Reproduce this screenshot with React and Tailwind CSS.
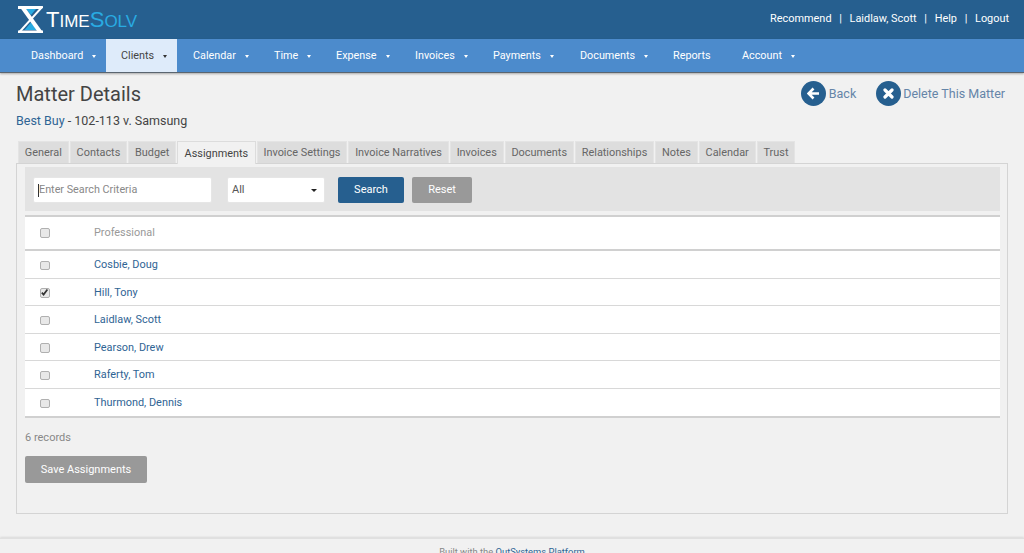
const nav = [
  ["Dashboard", "w-[90px]", "pl-[15px]"],
  ["Clients", "w-[71px]", "pl-[15px]", true],
  ["Calendar", "w-[82px]", "pl-[16px]"],
  ["Time", "w-[62px]", "pl-[15px]"],
  ["Expense", "w-[79px]", "pl-[15px]"],
  ["Invoices", "w-[78px]", "pl-[15px]"],
  ["Payments", "w-[87px]", "pl-[15px]"],
  ["Documents", "w-[93px]", "pl-[15px]"],
  ["Reports", "w-[69px]", "pl-[15px]", false, true],
  ["Account", "w-[80px]", "pl-[15px]"],
];
const tabs = ["General", "Contacts", "Budget", "Assignments", "Invoice Settings", "Invoice Narratives", "Invoices", "Documents", "Relationships", "Notes", "Calendar", "Trust"];
const people = [["Cosbie, Doug"], ["Hill, Tony", true], ["Laidlaw, Scott"], ["Pearson, Drew"], ["Raferty, Tom"], ["Thurmond, Dennis"]];

function Logo() {
  return (
    <div className="flex items-center">
      <svg width="25" height="27" viewBox="0 0 25 27" className="mt-[-1px]">
        <path d="M8 3H18L13 9Z" fill="#29abe2" />
        <path d="M6.5 24H19L13 16.5Z" fill="#29abe2" />
        <path d="M0 0H25L24 3H0Z" fill="#fff" />
        <path d="M0 27V24.5H25V27Z" fill="#fff" />
        <path d="M1 0H6L24 25H19Z" fill="#fff" />
        <path d="M24.5 0.5L1 26.5" stroke="#fff" strokeWidth="2" />
      </svg>
      <div className="ml-[3px] font-['Liberation_Sans',sans-serif] leading-none flex items-baseline mt-[1px]">
        <span className="text-white text-[22px]">T</span>
        <span className="text-white text-[17px]">IME</span>
        <span className="text-[#29abe2] text-[22px]">S</span>
        <span className="text-[#29abe2] text-[17px]">OLV</span>
      </div>
    </div>
  );
}

function Box({ checked }) {
  return (
    <span className="w-[9.5px] h-[9.5px] rounded-[2px] border border-[#b0b0b0] bg-[#e8e8e8] flex items-center justify-center">
      {checked && (
        <svg width="9" height="9" viewBox="0 0 9 9" className="shrink-0">
          <path d="M1.8 4.6L3.6 6.6L7.4 1.6" fill="none" stroke="#333" strokeWidth="1.7" />
        </svg>
      )}
    </span>
  );
}

export default function App() {
  return (
    <div className="h-[553px] w-[1024px] overflow-hidden bg-[#f1f1f1] font-['Roboto',sans-serif] text-[#444]">
      <header className="h-[39px] bg-[#265f8f] flex items-center justify-between pl-[18px] pr-[15px]">
        <Logo />
        <div className="flex items-center text-white text-[10.9px] gap-[7.7px]">
          <span>Recommend</span><span>|</span><span>Laidlaw, Scott</span><span>|</span><span>Help</span><span>|</span><span>Logout</span>
        </div>
      </header>
      <nav className="h-[34px] bg-[#4c8bcc] border-b border-[#5a6570] shadow-[0_1px_2px_rgba(0,0,0,0.3)] flex pl-[16px] text-[10.8px]">
        {nav.map(([t, w, pl, active, noCaret]) => (
          <div key={t} className={`${w} ${pl} h-[33px] pt-[2px] flex items-center ${active ? "bg-[#deebfa] text-[#444]" : "text-white"}`}>
            <span>{t}</span>
            {!noCaret && <span className={`ml-[9px] w-0 h-0 border-x-[2.5px] border-x-transparent border-t-[3px] ${active ? "border-t-[#333]" : "border-t-white"}`} />}
          </div>
        ))}
      </nav>

      <main className="px-[16px]">
        <div className="flex justify-between items-start h-[67px]">
          <div>
            <h1 className="text-[20px] leading-[24px] mt-[9px] text-[#444]">Matter Details</h1>
            <div className="text-[12.5px] leading-[16px] mt-[7px]">
              <span className="text-[#2f6494]">Best Buy</span> - 102-113 v. Samsung
            </div>
          </div>
          <div className="flex items-center mt-[8px] mr-[3px] text-[#6585a8] text-[12.5px]">
            <span className="w-[25px] h-[25px] rounded-full bg-[#265f8f] flex items-center justify-center mr-[3px]">
              <svg width="13" height="13" viewBox="0 0 13 13"><path d="M6.5 1.5L1.5 6.5L6.5 11.5M2 6.5H12" fill="none" stroke="#fff" strokeWidth="2.6" /></svg>
            </span>
            <span className="pt-[1px]">Back</span>
            <span className="w-[25px] h-[25px] rounded-full bg-[#265f8f] flex items-center justify-center ml-[20px] mr-[2px]">
              <svg width="11" height="11" viewBox="0 0 11 11"><path d="M2 2L9 9M9 2L2 9" stroke="#fff" strokeWidth="3.2" strokeLinecap="round" /></svg>
            </span>
            <span className="pt-[1px]">Delete This Matter</span>
          </div>
        </div>

        <div className="flex items-end pl-[2px] gap-[1px] h-[23px] text-[10.9px] relative z-10">
          {tabs.map((t) => (
            <div key={t} className={t === "Assignments"
              ? "h-[23px] mb-[-1px] px-[6.4px] pt-[2px] flex items-center bg-[#f1f1f1] border border-b-0 border-[#dcdcdc] text-[#444]"
              : "h-[22px] px-[5.85px] pt-[2px] flex items-center bg-[#dddddd] text-[#666] border-t border-x border-[#e4e4e4]"}>
              {t}
            </div>
          ))}
        </div>

        <section className="h-[351px] border border-[#d4d4d4] pl-[8px] pr-[7px] pt-[3px]">
          <div className="h-[44px] bg-[#e3e3e3] flex items-center pl-[8px] pt-[2px]">
            <div className="w-[179px] h-[26px] bg-white rounded-[2px] border border-[#e6e6e6] flex items-center pl-[4px] text-[10.8px] text-[#888]">
              <span className="w-px h-[13px] bg-[#333]" />Enter Search Criteria
            </div>
            <div className="ml-[15px] w-[98px] h-[26px] bg-white rounded-[2px] border border-[#e6e6e6] flex items-center justify-between pl-[4px] pr-[7px] text-[11px] text-[#555]">
              All
              <span className="w-0 h-0 border-x-[3px] border-x-transparent border-t-[3.5px] border-t-[#222]" />
            </div>
            <div className="ml-[13px] w-[66px] h-[26px] bg-[#265f8f] rounded-[2px] flex items-center justify-center text-white text-[11px]">Search</div>
            <div className="ml-[8px] w-[60px] h-[26px] bg-[#999] rounded-[2px] flex items-center justify-center text-white text-[11px]">Reset</div>
          </div>

          <div className="mt-[4px] bg-white border-t-2 border-b-2 border-[#d0d0d0] text-[10.9px]">
            <div className="h-[34px] flex items-center border-b-2 border-[#d0d0d0]">
              <div className="w-[69px] pl-[15px]"><Box /></div>
              <span className="text-[#999]">Professional</span>
            </div>
            {people.map(([name, c], i) => (
              <div key={name} className={`h-[27.5px] pt-[2px] flex items-center ${i < 5 ? "border-b border-[#d8d8d8]" : ""}`}>
                <div className="w-[69px] pl-[15px]"><Box checked={c} /></div>
                <span className="text-[#2f6494]">{name}</span>
              </div>
            ))}
          </div>

          <div className="mt-[13px] text-[11px] leading-[14px] text-[#888]">6 records</div>
          <div className="mt-[11px] w-[122px] h-[27px] pt-[2px] bg-[#999] rounded-[2px] flex items-center justify-center text-white text-[11px]">Save Assignments</div>
        </section>
      </main>

      <footer className="mt-[24px] h-[20px] border-t border-[#e0e0e0] shadow-[0_-1px_2px_rgba(0,0,0,0.1)] text-center text-[9.4px] pt-[6px] text-[#888]">
        Built with the <span className="text-[#2f6494]">OutSystems Platform</span>
      </footer>
    </div>
  );
}
